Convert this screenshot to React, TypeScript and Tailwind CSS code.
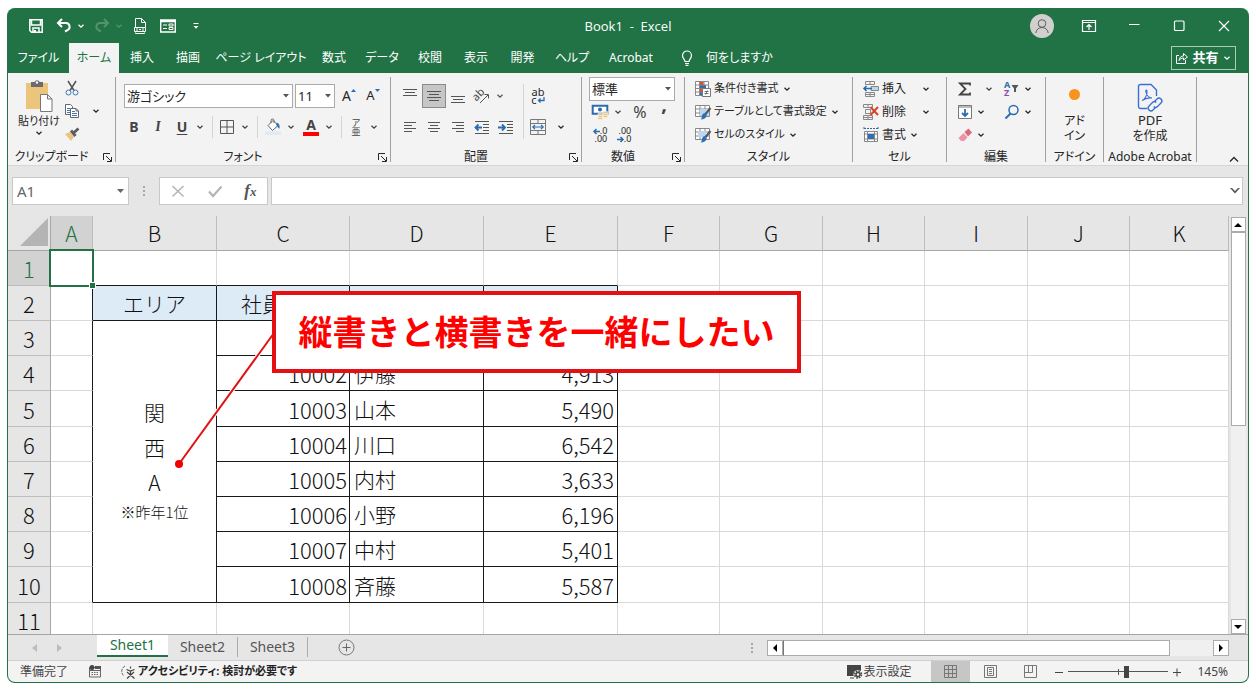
import React from "react";

const UI_FONT = "font-['Noto_Sans','Noto_Sans_CJK_JP',sans-serif]";
const SHEET_FONT = "font-['Noto_Sans_CJK_JP','Noto_Sans',sans-serif]";

interface Column {
  name: string;
  width: string;
}

interface Employee {
  id: string;
  name: string;
  sales: string;
}

const columns: Column[] = [
  { name: "A", width: "w-[42px]" },
  { name: "B", width: "w-[124px]" },
  { name: "C", width: "w-[133px]" },
  { name: "D", width: "w-[134px]" },
  { name: "E", width: "w-[134px]" },
  { name: "F", width: "w-[102px]" },
  { name: "G", width: "w-[103px]" },
  { name: "H", width: "w-[102px]" },
  { name: "I", width: "w-[103px]" },
  { name: "J", width: "w-[102px]" },
  { name: "K", width: "" },
];

const employees: Employee[] = [
  { id: "10001", name: "", sales: "" },
  { id: "10002", name: "伊藤", sales: "4,913" },
  { id: "10003", name: "山本", sales: "5,490" },
  { id: "10004", name: "川口", sales: "6,542" },
  { id: "10005", name: "内村", sales: "3,633" },
  { id: "10006", name: "小野", sales: "6,196" },
  { id: "10007", name: "中村", sales: "5,401" },
  { id: "10008", name: "斉藤", sales: "5,587" },
];

const tabs = [
  { label: "ファイル", width: "w-[61px]" },
  { label: "ホーム", width: "w-[50px]" },
  { label: "挿入", width: "w-[46px]" },
  { label: "描画", width: "w-[46px]" },
  { label: "ページ レイアウト", width: "w-[100px]" },
  { label: "数式", width: "w-[46px]" },
  { label: "データ", width: "w-[50px]" },
  { label: "校閲", width: "w-[46px]" },
  { label: "表示", width: "w-[46px]" },
  { label: "開発", width: "w-[47px]" },
  { label: "ヘルプ", width: "w-[52px]" },
  { label: "Acrobat", width: "w-[66px]" },
];

/* ---------- small helpers ---------- */

interface SvgProps {
  w?: number;
  h?: number;
  children: React.ReactNode;
}

function Svg({ w = 16, h = 16, children }: SvgProps) {
  return (
    <svg
      width={w}
      height={h}
      viewBox={`0 0 ${w} ${h}`}
      fill="none"
      stroke="currentColor"
      className="shrink-0 overflow-visible"
      aria-hidden="true"
    >
      {children}
    </svg>
  );
}

function Chevron() {
  return (
    <Svg w={8} h={8}>
      <path d="M1.500 2.800 4 5.200 6.500 2.800" strokeWidth="1.300" />
    </Svg>
  );
}

interface ToolProps {
  label: string;
  className?: string;
  children: React.ReactNode;
}

function Tool({ label, className = "w-6", children }: ToolProps) {
  return (
    <button type="button" aria-label={label} className={`flex h-6 shrink-0 items-center justify-center ${className}`}>
      {children}
    </button>
  );
}

function More({ label, className = "w-3" }: { label: string; className?: string }) {
  return (
    <Tool label={label} className={className}>
      <Chevron />
    </Tool>
  );
}

interface GroupProps {
  title: string;
  className: string;
  launcher?: boolean;
  children: React.ReactNode;
}

function Group({ title, className, launcher, children }: GroupProps) {
  return (
    <section aria-label={title} className={`flex shrink-0 flex-col pt-1 pb-[3px] ${className}`}>
      <div className="flex flex-1 flex-col border-r border-[#a0a0a0]">
        <div className="flex-1">{children}</div>
        <div className="-mb-[3px] flex h-4 items-center">
          <span className="flex-1 whitespace-nowrap text-center text-xs leading-4">{title}</span>
          {launcher && (
            <button type="button" aria-label={`${title}の設定`} className="mr-[3px] ml-2 flex items-center">
              <Svg w={9} h={9}>
                <path d="M.500 7V.500H7M3 3l5 5M8.500 4v4.500H4" />
              </Svg>
            </button>
          )}
        </div>
      </div>
    </section>
  );
}

function Divider() {
  return <div className="h-[22px] w-px shrink-0 bg-[#d4d4d4]" />;
}

interface PickerProps {
  label: string;
  value: string;
  className: string;
}

function Picker({ label, value, className }: PickerProps) {
  return (
    <label className={`relative flex h-6 items-center ${className}`}>
      <select aria-label={label} className="h-full w-full appearance-none border border-[#ababab] bg-white px-0.5 text-[13px] leading-5">
        <option>{value}</option>
      </select>
      <svg width="6" height="4" viewBox="0 0 6 4" className="pointer-events-none absolute right-1 fill-[#555]">
        <path d="M0 0h6L3 3.500z" />
      </svg>
    </label>
  );
}

/* ---------- title bar ---------- */

function TitleBar() {
  return (
    <header className="grid h-[35px] grid-cols-[1fr_auto_1fr] items-center text-white">
      <div className="flex items-center pl-4">
        <Tool label="上書き保存">
          <Svg>
            <path d="M1.800 1.800h12.400v12.400H3.500L1.800 12.500zM3.500 2v5h9V2M5 14v-4h6v4" strokeWidth="1.500" />
            <path d="M6 12h2v2H6z" fill="currentColor" stroke="none" />
          </Svg>
        </Tool>
        <Tool label="元に戻す" className="ml-1 w-6">
          <Svg>
            <path d="M6 1 2 5l4 4M2.500 5H10a3.800 3.800 0 0 1 1.500 7.200L9 13.500" strokeWidth="2" />
          </Svg>
        </Tool>
        <More label="元に戻す一覧" className="w-[10px]" />
        <span className="ml-1 flex text-[#549370]">
          <Tool label="やり直し">
            <Svg>
              <path d="m10 1 4 4-4 4M13.500 5H6a3.800 3.800 0 0 0-1.500 7.200L7 13.500" strokeWidth="2" />
            </Svg>
          </Tool>
          <More label="やり直し一覧" className="w-[10px]" />
        </span>
        <Tool label="印刷プレビュー" className="ml-1 w-6">
          <Svg>
            <path d="M3.500 9V.500h6l4 4V9M9.500.500v4h4M3.500 14.500v1h9v-1" />
            <path d="M2.500 9.500h11v4h-11zM5 9.500v4M11 9.500v4M7 11.500h2" />
          </Svg>
        </Tool>
        <Tool label="フォーム" className="ml-1 w-6">
          <Svg>
            <path d="M.700 2h14.600v12H.700zM.700 3.500h14.600" strokeWidth="1.400" />
            <path d="M3 7h4M3 10.500h4M9 6h4v2H9zM9 9.500h4v2H9z" />
          </Svg>
        </Tool>
        <Tool label="クイック アクセス ツール バーのユーザー設定" className="ml-1 w-6">
          <Svg w={8} h={8}>
            <path d="M1.500 1.500h5" />
            <path d="M1.500 4h5L4 6.800z" fill="currentColor" stroke="none" />
          </Svg>
        </Tool>
      </div>
      <h1 className="whitespace-pre text-[13px] leading-5 font-['Open_Sans',sans-serif]">Book1  -  Excel</h1>
      <div className="flex items-center justify-end pr-3">
        <button type="button" aria-label="アカウント" className="mr-[23px] flex size-6 items-center justify-center rounded-full bg-[#d2d0ce] text-[#605e5c]">
          <Svg>
            <circle cx="8" cy="5.500" r="3.800" />
            <path d="M1.800 15c.5-3.500 3-5.500 6.200-5.500s5.700 2 6.200 5.500" />
          </Svg>
        </button>
        <Tool label="リボンの表示オプション">
          <Svg>
            <path d="M1.500 2.500h13v11h-13zM1.500 4.500h13M8 12V7M5.500 9 8 6.500 10.500 9" strokeWidth="1.200" />
          </Svg>
        </Tool>
        <Tool label="最小化" className="ml-[21px] w-6">
          <Svg><path d="M3 6.500h10.500" strokeWidth="1.200" /></Svg>
        </Tool>
        <Tool label="最大化" className="ml-[21px] w-6">
          <Svg><rect x="3.500" y="3" width="9.500" height="9.500" rx="1" strokeWidth="1.200" /></Svg>
        </Tool>
        <Tool label="閉じる" className="ml-[21px] w-6">
          <Svg><path d="m3 3 10 10M13 3 3 13" strokeWidth="1.200" /></Svg>
        </Tool>
      </div>
    </header>
  );
}

function TabBar() {
  return (
    <nav className="flex h-[30px] items-stretch text-xs text-white">
      {tabs.map((tab) => (
        <button
          key={tab.label}
          type="button"
          className={`shrink-0 whitespace-nowrap ${tab.width} ${tab.label === "ホーム" ? "bg-[#f3f3f3] text-[#217346]" : ""}`}
        >
          {tab.label}
        </button>
      ))}
      <button type="button" className="ml-4 flex items-center gap-3 whitespace-nowrap">
        <Svg w={14} h={16}>
          <path d="M5 11.500c0-2-2.500-3-2.500-6a4.500 4.500 0 0 1 9 0c0 3-2.500 4-2.500 6zM5 13.500h4M5.500 15.300h3" strokeWidth="1.200" />
        </Svg>
        何をしますか
      </button>
      <button
        type="button"
        className="mt-[3px] mr-3 mb-[3px] ml-auto flex w-[65px] items-center justify-center gap-1 border border-[#a9cdb8] text-[13px] font-bold"
      >
        <Svg w={12} h={12}>
          <path d="M3 3.500H.500v8h9V8" />
          <path d="M3 8.500c.3-3 2-4.500 4.500-4.500V1.500l4 3.500-4 3V6C5.500 6 4 6.800 3 8.500z" />
        </Svg>
        共有
        <Chevron />
      </button>
    </nav>
  );
}

/* ---------- ribbon ---------- */

function ClipboardGroup() {
  return (
    <Group title="クリップボード" className="w-[108px]" launcher>
      <div className="flex">
        <button type="button" className="flex w-14 flex-col items-center whitespace-nowrap pt-0.5 pl-1.5 text-[11px] leading-4">
          <Svg w={28} h={34}>
            <g stroke="none">
              <path d="M1 4h22v26H1z" fill="#ecc57d" />
              <path d="M6 3h3.500a2.800 2.800 0 0 1 5.200 0H18v5H6z" fill="#6b6b6b" />
              <circle cx="12" cy="3.500" r="1.200" fill="#fff" />
            </g>
            <path d="M15.500 15.500h7l4.500 4.500v12.500H15.500zM22.500 15.500V20H27" fill="#fff" stroke="#777" />
          </Svg>
          <span>貼り付け</span>
          <Chevron />
        </button>
        <div className="flex flex-col">
          <button type="button" aria-label="切り取り" className="flex h-[22px] items-center">
            <Svg>
              <path d="m4 1 6 9.500M12 1 6 10.500" stroke="#555" strokeWidth="1.500" />
              <circle cx="4.500" cy="12.500" r="2.500" stroke="#3f78b5" />
              <circle cx="11.500" cy="12.500" r="2.500" stroke="#3f78b5" />
            </Svg>
          </button>
          <button type="button" aria-label="コピー" className="flex h-6 items-center gap-3">
            <Svg>
              <path d="M1.500 1.500h5l2 2v8h-7z" fill="#fff" stroke="#666" />
              <path d="M6.500 5.500h5.500l2.500 2.500v6.500h-8zM12 5.500V8h2.500" fill="#fff" stroke="#666" />
              <path d="M3 5.500h3M3 7.500h3M3 9.500h3M8 8.500h3M8 10.500h5M8 12.500h5" stroke="#3f78b5" />
            </Svg>
            <Chevron />
          </button>
          <button type="button" aria-label="書式のコピー/貼り付け" className="flex h-[22px] items-center">
            <Svg>
              <path d="m1 8 5-2 4 5-3 4z" fill="#ecc57d" stroke="none" />
              <path d="m7 4.500 4.500 5.500M9.500 7 14.500 2.500" stroke="#5c5c5c" strokeWidth="2.800" />
            </Svg>
          </button>
        </div>
      </div>
    </Group>
  );
}

function FontGroup() {
  return (
    <Group title="フォント" className="w-[275px]" launcher>
      <div className="flex flex-col gap-[7px] pt-[7px]">
        <div className="flex items-center pl-2">
          <Picker label="フォント" value="游ゴシック" className="w-[169px]" />
          <Picker label="フォント サイズ" value="11" className="ml-0.5 w-10" />
          <Tool label="フォント サイズの拡大" className="ml-0.5 w-6">
            <span className="text-sm">A</span>
            <svg width="5" height="3" viewBox="0 0 5 3" className="mb-3 fill-[#2b6cb0]"><path d="M0 3h5L2.500 0z" /></svg>
          </Tool>
          <Tool label="フォント サイズの縮小">
            <span className="text-[13px]">A</span>
            <svg width="5" height="3" viewBox="0 0 5 3" className="mb-3 fill-[#2b6cb0]"><path d="M0 0h5L2.500 3z" /></svg>
          </Tool>
        </div>
        <div className="flex items-center pl-1.5 text-sm text-[#444]">
          <Tool label="太字"><b>B</b></Tool>
          <Tool label="斜体"><b className="font-serif italic">I</b></Tool>
          <Tool label="下線"><b className="underline underline-offset-2">U</b></Tool>
          <More label="下線の種類" />
          <span className="ml-1.5"><Divider /></span>
          <Tool label="罫線" className="ml-0.5 w-6">
            <Svg><path d="M1.500 1.500h13v13h-13zM8 1.500v13M1.500 8h13" stroke="#555" /></Svg>
          </Tool>
          <More label="罫線の種類" />
          <span className="ml-1.5"><Divider /></span>
          <Tool label="塗りつぶしの色" className="ml-[3px] w-6">
            <Svg>
              <path d="m3 6.500 5-5 5 5-5.500 5z" fill="#fff" stroke="#666" />
              <path d="M6 4V1.500a1.500 1.500 0 0 1 3 0V4" stroke="#666" />
              <path d="M11.500 3.500c2.500.5 3.500 2.500 3 6-1 .5-1.500-1.500-3-3z" fill="#2f6fb3" stroke="none" />
              <path d="M0 12.500h16V16H0z" fill="#dcebf7" stroke="none" />
            </Svg>
          </Tool>
          <More label="塗りつぶしの色の一覧" />
          <Tool label="フォントの色" className="ml-0.5 w-6">
            <span className="flex h-[18px] w-4 items-center justify-center border-b-4 border-[#f00] font-bold leading-[14px]">A</span>
          </Tool>
          <More label="フォントの色の一覧" />
          <span className="ml-1.5"><Divider /></span>
          <Tool label="ふりがなの表示" className="ml-0.5 w-6">
            <span className="flex flex-col text-[9px] leading-[9px]">
              <span>ア</span>
              <span>亜</span>
            </span>
          </Tool>
          <More label="ふりがなの設定" />
        </div>
      </div>
    </Group>
  );
}

function AlignmentGroup() {
  return (
    <Group title="配置" className="w-[191px]" launcher>
      <div className="flex pt-[7px]">
        <div className="flex w-[132px] flex-col gap-[7px] pl-[7px] text-[#555]">
          <div className="flex">
            <Tool label="上揃え"><Svg><path d="M1 1.500h14M3 4.500h10M1 7.500h14" /></Svg></Tool>
            <Tool label="上下中央揃え" className="w-6 border border-[#8a8a8a] bg-[#c6c6c6]">
              <Svg><path d="M1 3.500h14M3 6.500h10M1 9.500h14M3 12.500h10" /></Svg>
            </Tool>
            <Tool label="下揃え"><Svg><path d="M1 8.500h14M3 11.500h10M1 14.500h14" /></Svg></Tool>
            <Tool label="方向">
              <Svg>
                <text x="-1" y="10" fontSize="11" stroke="none" fill="#444" transform="rotate(-45 5 8)">ab</text>
                <path d="m6 15 8-8M10.500 6.500H14.500V10.500" />
              </Svg>
            </Tool>
            <More label="方向の一覧" />
          </div>
          <div className="flex">
            <Tool label="左揃え"><Svg><path d="M2 3.500h12M2 6.500h8M2 9.500h12M2 12.500h8" /></Svg></Tool>
            <Tool label="中央揃え"><Svg><path d="M2 3.500h12M4 6.500h8M2 9.500h12M4 12.500h8" /></Svg></Tool>
            <Tool label="右揃え"><Svg><path d="M2 3.500h12M6 6.500h8M2 9.500h12M6 12.500h8" /></Svg></Tool>
            <Tool label="インデントを減らす">
              <Svg>
                <path d="M1 2.500h14M9 5.500h6M9 8.500h6M9 11.500h6M1 14.500h14" />
                <path d="M8 8.500H1.500M4.500 5.500l-3 3 3 3" stroke="#2b6cb0" strokeWidth="1.800" />
              </Svg>
            </Tool>
            <Tool label="インデントを増やす">
              <Svg>
                <path d="M1 2.500h14M9 5.500h6M9 8.500h6M9 11.500h6M1 14.500h14" />
                <path d="M0 8.500h6.500M4 5.500l3 3-3 3" stroke="#2b6cb0" strokeWidth="1.800" />
              </Svg>
            </Tool>
          </div>
        </div>
        <div className="flex flex-col gap-[7px] border-l border-[#d4d4d4]">
          <Tool label="折り返して全体を表示する" className="w-7">
            <span className="flex flex-col text-[11px] leading-[8px]">
              <span>ab</span>
              <span className="flex items-center">
                c
                <Svg w={8} h={8}><path d="M7 1v3.500H1.500M3.500 2.500l-2 2 2 2" stroke="#2b6cb0" strokeWidth="1.300" /></Svg>
              </span>
            </span>
          </Tool>
          <div className="flex">
            <Tool label="セルを結合して中央揃え" className="w-7">
              <Svg>
                <path d="M.500.500h15v15H.500zM.500 4.500h15M.500 11.500h15M8 .500v4M8 11.500v4" stroke="#777" />
                <path d="M2.500 8h11M5 5.800 2.800 8 5 10.200M11 5.800 13.200 8 11 10.200" stroke="#2b6cb0" strokeWidth="1.200" />
              </Svg>
            </Tool>
            <More label="結合の種類" className="w-[18px]" />
          </div>
        </div>
      </div>
    </Group>
  );
}

function NumberGroup() {
  return (
    <Group title="数値" className="w-[103px]" launcher>
      <Picker label="表示形式" value="標準" className="ml-[7px] w-[86px]" />
      <div className="flex h-[22px] items-center pl-1.5 text-[#444]">
        <Tool label="通貨表示形式">
          <Svg>
            <path d="M.700 1.700h14.600v8H.700z" stroke="#2b6cb0" strokeWidth="2" fill="#fff" />
            <circle cx="8" cy="5.500" r="2" fill="#2b6cb0" stroke="none" />
            <path d="M6 9.500h4.500v6H6zM11 7.500h4.500v6H11z" fill="#ecc57d" stroke="#f3f3f3" strokeWidth=".6" />
            <path d="M6 11.500h4.500M6 13.500h4.500M11 9.500h4.500M11 11.500h4.500" stroke="#f3f3f3" strokeWidth=".7" />
          </Svg>
        </Tool>
        <More label="通貨の一覧" />
        <Tool label="パーセント スタイル" className="ml-1 w-6"><span className="text-base">%</span></Tool>
        <Tool label="桁区切りスタイル"><b className="pb-4 text-xl leading-5">,</b></Tool>
      </div>
      <div className="flex h-6 items-center pl-1.5 text-[9px] leading-[8px]">
        <Tool label="小数点以下の表示桁数を増やす">
          <span className="flex flex-col items-end">
            <span className="flex items-center">
              <Svg w={7} h={7}><path d="M7 3.500H1M3.500 1 1 3.500 3.500 6" stroke="#2b6cb0" strokeWidth="1.500" /></Svg>
              .0
            </span>
            <span>.00</span>
          </span>
        </Tool>
        <Tool label="小数点以下の表示桁数を減らす">
          <span className="flex flex-col items-end">
            <span>.00</span>
            <span className="flex items-center">
              <Svg w={7} h={7}><path d="M0 3.500h6M3.500 1 6 3.500 3.500 6" stroke="#2b6cb0" strokeWidth="1.500" /></Svg>
              .0
            </span>
          </span>
        </Tool>
      </div>
    </Group>
  );
}

function CondIcon() {
  return (
    <Svg>
      <path d="M.500.500h13v14H.500zM.500 4h13M.500 7.500h13M.500 11h13M4.500.500v14M9 .500v14" fill="#fff" stroke="#888" />
      <path d="M5 1h3.500v3H5zM5 7.500h3.500V11H5z" fill="#d9532c" stroke="none" />
      <path d="M5 4.300h6V7H5zM5 11.300h3v3H5z" fill="#2f6fb3" stroke="none" />
      <path d="M7.500 7.500h8v8h-8z" fill="#fff" stroke="#777" />
      <path d="M9.500 10.500h4M9.500 12.500h4M12.500 9.500l-2 4" stroke="#555" strokeWidth=".8" />
    </Svg>
  );
}

function BrushTableIcon({ filled }: { filled: boolean }) {
  return (
    <Svg>
      <path d="M.500 1.500h14v11H.500zM.500 5h14M.500 9h14M5 1.500v11M10 1.500v11" fill="#fff" stroke="#888" />
      <path d={filled ? "M3 4h8v6H3z" : "M5 5h9v7H5z"} fill="#bcd6ee" stroke="none" />
      <path d="m15.500 4-5 6" stroke="#555" strokeWidth="2" />
      <path d="M10.500 9c1 .5 1.500 1.500 1 3-.5 2-2.500 3.500-6 3.500 1.500-1 1-2 1.500-4 .5-1.500 2-2.800 3.500-2.500z" fill="#2f6fb3" stroke="none" />
    </Svg>
  );
}

function StyleGroup() {
  const rows = [
    { label: "条件付き書式", icon: <CondIcon /> },
    { label: "テーブルとして書式設定", icon: <BrushTableIcon filled={false} /> },
    { label: "セルのスタイル", icon: <BrushTableIcon filled /> },
  ];
  return (
    <Group title="スタイル" className="w-[168px]">
      {rows.map((row) => (
        <button key={row.label} type="button" className="flex h-[23px] items-center whitespace-nowrap pl-2.5 text-[11px]">
          {row.icon}
          <span className="mr-1 ml-[3px]">{row.label}</span>
          <Chevron />
        </button>
      ))}
    </Group>
  );
}

function CellGroup() {
  return (
    <Group title="セル" className="w-[94px]">
      <button type="button" className="flex h-[23px] items-center pl-2.5 text-xs">
        <Svg>
          <path d="M2.500.500h9v3h-9zM7 .500v3M2.500 11.500h9v4h-9zM7 11.500v4M2.500 13.500h9" stroke="#888" />
          <path d="M8 5.500h7.500v4H8z" fill="#bcd6ee" stroke="#888" />
          <path d="M9 7.500H1M3.500 5 1 7.500 3.500 10" stroke="#2b6cb0" strokeWidth="1.600" />
        </Svg>
        <span className="mr-4 ml-[3px]">挿入</span>
        <Chevron />
      </button>
      <button type="button" className="flex h-[23px] items-center pl-2.5 text-xs">
        <Svg>
          <path d="M.500.500h9v3h-9zM5 .500v3M.500 11.500h9v4h-9zM5 11.500v4M.500 13.500h9M2.500 5.500h5v4h-5z" stroke="#888" />
          <path d="m7.500 3 7.500 8M15 3l-7.500 8" stroke="#d9432c" strokeWidth="2" />
        </Svg>
        <span className="mr-4 ml-[3px]">削除</span>
        <Chevron />
      </button>
      <button type="button" className="flex h-[23px] items-center pl-2.5 text-xs">
        <Svg>
          <path d="M1 1.500h14M1 0v3M15 0v3" stroke="#2b6cb0" strokeDasharray="2 1" />
          <path d="M1.500 4.500h13v10h-13zM4.500 4.500v10M11.500 4.500v10M1.500 7h13M1.500 12h13" fill="#fff" stroke="#888" />
          <path d="M5 7h6v5H5z" fill="#2f6fb3" stroke="none" />
        </Svg>
        <span className="mr-1 ml-[3px]">書式</span>
        <Chevron />
      </button>
    </Group>
  );
}

function EditGroup() {
  return (
    <Group title="編集" className="w-[99px]">
      <div className="grid grid-cols-[50px_48px]">
        <button type="button" aria-label="オート SUM" className="flex h-[23px] items-center gap-3 pl-2.5 text-[#444]">
          <Svg><path d="M13 4.500V2.500H3L8.500 8 3 13.500h10v-2" strokeWidth="1.800" /></Svg>
          <Chevron />
        </button>
        <button type="button" aria-label="並べ替えとフィルター" className="flex h-[23px] items-center gap-1 pl-[7px]">
          <Svg>
            <text x="0" y="7" fontSize="9" fontWeight="bold" stroke="none" fill="#2b6cb0">A</text>
            <text x="0" y="15" fontSize="9" fontWeight="bold" stroke="none" fill="#8e4fa8">Z</text>
            <path d="M7.500 4h7L12 7.500V11h-2V7.500z" fill="#555" stroke="none" />
          </Svg>
          <Chevron />
        </button>
        <button type="button" aria-label="フィル" className="flex h-[23px] items-center gap-1 pl-2.5">
          <Svg>
            <path d="M1.500 1.500h13v13h-13zM1.500 3h13" fill="#fff" stroke="#777" />
            <path d="M8 5v7M5 9l3 3 3-3" stroke="#2b6cb0" strokeWidth="1.800" />
          </Svg>
          <Chevron />
        </button>
        <button type="button" aria-label="検索と選択" className="flex h-[23px] items-center gap-1 pl-[7px]">
          <Svg>
            <circle cx="9.500" cy="6" r="4.500" stroke="#2b6cb0" strokeWidth="1.500" />
            <path d="m6.500 9.500-5 5" stroke="#2b6cb0" strokeWidth="2" />
          </Svg>
          <Chevron />
        </button>
        <button type="button" aria-label="クリア" className="flex h-[23px] items-center gap-1 pl-2.5">
          <Svg>
            <path d="m7.500 5 4-3.500 3.500 4L11 9.500z" fill="#e0677e" stroke="none" />
            <path d="m6.500 6 4 4.500L7 14H4l-2.500-3z" fill="#ee93a3" stroke="none" />
          </Svg>
          <Chevron />
        </button>
      </div>
    </Group>
  );
}

function Ribbon() {
  return (
    <div className="flex h-[93px] border-b border-[#d6d6d6] bg-[#f3f3f3] text-[#262626]">
      <ClipboardGroup />
      <FontGroup />
      <AlignmentGroup />
      <NumberGroup />
      <StyleGroup />
      <CellGroup />
      <EditGroup />
      <Group title="アドイン" className="w-[58px]">
        <button type="button" className="flex w-full flex-col items-center text-xs leading-[15px]">
          <span className="mt-3 mb-[13px] size-[11px] rounded-full bg-[#f7941d]" />
          <span>アド</span>
          <span>イン</span>
        </button>
      </Group>
      <Group title="Adobe Acrobat" className="w-[93px]">
        <button type="button" className="flex w-full flex-col items-center pt-1.5 text-[13px] leading-[15px]">
          <Svg w={26} h={30}>
            <g stroke="#3b6fd4" strokeWidth="1.400">
              <path d="M10 25.500H3.500a2 2 0 0 1-2-2v-20a2 2 0 0 1 2-2H14l5.500 5.500v6" />
              <path d="M5 17.500c3-1.500 5.500-5.500 5-9.500-.3-1.500-1.500-1-1.200.5.600 3.500 3 6 6.200 6.500-3.500-.5-7 .5-10 2.500z" strokeWidth="1.100" />
              <path d="m17.500 18.500 2.500-2.500a2.700 2.700 0 0 1 4 4l-3.500 3.500a2.700 2.700 0 0 1-3.800 0" />
              <path d="m18.500 24.500-2.500 2.500a2.700 2.700 0 0 1-4-4l3.500-3.500a2.700 2.700 0 0 1 3.800 0" />
            </g>
          </Svg>
          PDF
          <span className="text-xs leading-[15px]">を作成</span>
        </button>
      </Group>
      <button type="button" aria-label="リボンを折りたたむ" className="mr-2 mb-0.5 ml-auto self-end">
        <Svg w={12} h={8}><path d="M2 6.500 6 2.500l4 4" strokeWidth="1.300" /></Svg>
      </button>
    </div>
  );
}

/* ---------- formula bar ---------- */

function FormulaBar() {
  return (
    <div className="flex items-center bg-[#e6e6e6] pt-[11px] pr-[5px] pb-[11px] pl-1">
      <div className="flex h-7 w-[117px] items-center border border-[#c8c8c8] bg-white">
        <input aria-label="名前ボックス" defaultValue="A1" className="w-0 flex-1 px-1 text-[15px] text-[#666]" />
        <button type="button" aria-label="名前の一覧" className="px-1">
          <svg width="7" height="4" viewBox="0 0 7 4" className="fill-[#666]"><path d="M0 0h7L3.500 4z" /></svg>
        </button>
      </div>
      <Dots />
      <div className="flex h-7 w-[109px] items-center justify-around border border-[#c8c8c8] bg-white text-[#b5b5b5]">
        <button type="button" aria-label="キャンセル">
          <Svg><path d="m2.500 3 11 10.500M13.500 3l-11 10.500" strokeWidth="1.600" /></Svg>
        </button>
        <button type="button" aria-label="入力">
          <Svg><path d="m2 8.500 4 4.500 8.500-9.500" strokeWidth="2.200" /></Svg>
        </button>
        <button type="button" aria-label="関数の挿入" className="font-['Liberation_Serif',serif] text-[17px] leading-5 font-bold text-[#555] italic">
          f<span className="text-[13px]">x</span>
        </button>
      </div>
      <div className="ml-[3px] flex h-7 flex-1 items-center border border-[#c8c8c8] bg-white">
        <input aria-label="数式バー" className="w-0 flex-1 px-1" />
        <button type="button" aria-label="数式バーの展開" className="px-0.5 text-[#444]">
          <svg width="10" height="6" viewBox="0 0 10 6" className="fill-[#555]"><path d="M0 0h2l3 3 3-3h2L5 5.500z" /></svg>
        </button>
      </div>
    </div>
  );
}

function Dots() {
  return (
    <div className="flex w-[30px] flex-col items-center gap-0.5">
      <span className="size-0.5 bg-[#a6a6a6]" />
      <span className="size-0.5 bg-[#a6a6a6]" />
      <span className="size-0.5 bg-[#a6a6a6]" />
    </div>
  );
}

/* ---------- worksheet ---------- */

const GRID = "border-r border-b border-[#d9d9d9]";
const RULED = "border-r border-b border-[#1a1a1a]";

function RowHeader({ row }: { row: number }) {
  return (
    <th
      scope="row"
      className={`border-r border-b border-r-[#a6a6a6] border-b-[#bdbdbd] text-center text-[22px] leading-7 font-light ${
        row === 1 ? "bg-[#d2d2d2] text-[#217346]" : "bg-[#e6e6e6]"
      } ${row % 5 === 0 ? "h-9" : "h-[35px]"}`}
    >
      {row}
    </th>
  );
}

function EmptyCells({ from }: { from: number }) {
  return (
    <>
      {columns.slice(from).map((col) => (
        <td key={col.name} className={GRID} />
      ))}
    </>
  );
}

function Sheet() {
  return (
    <table className={`w-full table-fixed border-separate border-spacing-0 text-[21px] leading-7 font-light text-[#111] ${SHEET_FONT}`}>
      <colgroup>
        <col className="w-[43px]" />
        {columns.map((col) => (
          <col key={col.name} className={col.width} />
        ))}
      </colgroup>
      <thead>
        <tr>
          <th aria-label="すべて選択" className="h-[35px] border-r border-b border-[#a6a6a6] bg-[#e6e6e6] pr-0.5 pb-0.5">
            <svg width="28" height="28" viewBox="0 0 28 28" className="ml-auto fill-[#b4b4b4]"><path d="M28 0v28H0z" /></svg>
          </th>
          {columns.map((col) => (
            <th
              key={col.name}
              scope="col"
              className={`border-r border-b border-r-[#bdbdbd] border-b-[#a6a6a6] text-center font-light ${
                col.name === "A" ? "bg-[#d2d2d2] text-[#217346]" : "bg-[#e6e6e6]"
              }`}
            >
              {col.name}
            </th>
          ))}
        </tr>
      </thead>
      <tbody>
        <tr>
          <RowHeader row={1} />
          <td className={`relative ${GRID}`}>
            <span className="absolute -inset-0.5 border-2 border-[#217346]" />
            <span className="absolute -right-[3px] -bottom-[3px] size-[5px] bg-[#217346] outline outline-white" />
          </td>
          {columns.slice(1, 5).map((col) => (
            <td key={col.name} className="border-r border-b border-r-[#d9d9d9] border-b-[#1a1a1a]" />
          ))}
          <EmptyCells from={5} />
        </tr>
        <tr>
          <RowHeader row={2} />
          <td className="border-r border-b border-r-[#1a1a1a] border-b-[#d9d9d9]" />
          <td className={`bg-[#ddebf7] text-center ${RULED}`}>エリア</td>
          <td className={`bg-[#ddebf7] text-center ${RULED}`}>社員番号</td>
          <td className={`bg-[#ddebf7] ${RULED}`} />
          <td className={`bg-[#ddebf7] ${RULED}`} />
          <EmptyCells from={5} />
        </tr>
        {employees.map((emp, i) => (
          <tr key={emp.id}>
            <RowHeader row={i + 3} />
            <td className="border-r border-b border-r-[#1a1a1a] border-b-[#d9d9d9]" />
            {i === 0 && (
              <td rowSpan={employees.length} className={`pb-1 text-center align-middle leading-[35px] ${RULED}`}>
                関
                <br />
                西
                <br />
                A
                <div className="text-[15px] leading-6">※昨年1位</div>
              </td>
            )}
            <td className={`pr-0.5 text-right text-[22px] leading-7 ${RULED}`}>{emp.id}</td>
            <td className={`pl-1 ${RULED}`}>{emp.name}</td>
            <td className={`pr-[3px] text-right text-[22px] leading-7 ${RULED}`}>{emp.sales}</td>
            <EmptyCells from={5} />
          </tr>
        ))}
        <tr>
          <RowHeader row={11} />
          <EmptyCells from={0} />
        </tr>
      </tbody>
    </table>
  );
}

function Callout() {
  return (
    <>
      <svg width="110" height="150" viewBox="0 0 110 150" className="absolute top-[110px] left-[164px]">
        <path d="M102 7 7 138" stroke="#fff" strokeWidth="4" />
        <path d="M102 7 7 138" stroke="#e01010" strokeWidth="2" />
        <circle cx="7" cy="138" r="4" fill="#f00000" />
      </svg>
      <p
        className={`absolute top-[75px] left-[264px] flex h-[82px] w-[529px] items-center justify-center border-4 border-[#e60f12] bg-white pb-1 text-[34px] font-bold whitespace-nowrap text-[#f00] ${SHEET_FONT}`}
      >
        縦書きと横書きを一緒にしたい
      </p>
    </>
  );
}

function ArrowButton({ label, path, className }: { label: string; path: string; className: string }) {
  return (
    <button type="button" aria-label={label} className={`flex shrink-0 items-center justify-center border border-[#ababab] bg-white ${className}`}>
      <svg width="8" height="8" viewBox="0 0 8 8" className="fill-black"><path d={path} /></svg>
    </button>
  );
}

function SheetTabs() {
  return (
    <div className="flex h-[26px] items-start border-b border-[#d0d0d0] bg-[#e6e6e6] text-sm text-[#555]">
      <div className="flex h-[25px] w-[89px] items-center gap-5 pl-6">
        <svg width="5" height="8" viewBox="0 0 5 8" className="fill-[#bdbdbd]"><path d="M5 0v8L0 4z" /></svg>
        <svg width="5" height="8" viewBox="0 0 5 8" className="fill-[#bdbdbd]"><path d="M0 0v8l5-4z" /></svg>
      </div>
      <button type="button" className="h-[22px] w-[71px] border-b-2 border-[#217346] bg-white text-[#217346]">Sheet1</button>
      <button type="button" className="mt-0.5 h-5 w-[70px] border-r border-[#ababab]">Sheet2</button>
      <button type="button" className="mt-0.5 h-5 w-[70px] border-r border-[#ababab]">Sheet3</button>
      <button type="button" aria-label="新しいシート" className="mt-1 ml-[30px]">
        <Svg w={17} h={17}>
          <circle cx="8.500" cy="8.500" r="7.500" stroke="#777" />
          <path d="M8.500 4.500v8M4.500 8.500h8" stroke="#666" />
        </Svg>
      </button>
      <div className="ml-auto flex h-[25px] w-[511px] items-center pr-[19px]">
        <Dots />
        <ArrowButton label="左へスクロール" path="M6 0v8L2 4z" className="h-4 w-4" />
        <div className="flex h-4 flex-1 bg-[#f0f0f0]">
          <div className="w-[90%] border border-[#ababab] border-l-[#777] bg-white" />
        </div>
        <ArrowButton label="右へスクロール" path="M2 0v8l4-4z" className="h-4 w-4" />
      </div>
    </div>
  );
}

function StatusBar() {
  return (
    <footer className="flex h-[21px] items-center bg-[#f3f3f3] text-xs text-[#444]">
      <span className="ml-3">準備完了</span>
      <button type="button" aria-label="マクロの記録" className="ml-[21px]">
        <Svg w={13} h={13}>
          <path d="M.500 2.500h11v9.500H.500zM.500 5.500h11" stroke="#666" />
          <path d="M2.500 7.500h7M2.500 9.500h7" stroke="#666" strokeDasharray="1.500 1" />
          <circle cx="3" cy="2.500" r="2.500" fill="#444" stroke="none" />
          <path d="M6 1h6v3H6z" fill="#555" stroke="none" />
        </Svg>
      </button>
      <button type="button" className="ml-[18px] flex items-center gap-0.5 text-[11px] font-bold text-[#222]">
        <Svg>
          <path d="M5 2a6 6 0 0 0-1 10" stroke="#666" strokeDasharray="3 1" />
          <path d="m6.500 5.500 4 1.500 4-1.500M10.500 7v3M10.500 2.500v2M7 8l7.500 6.500M14 8l-7 6.500" stroke="#444" strokeWidth="1.200" />
        </Svg>
        アクセシビリティ: 検討が必要です
      </button>
      <button type="button" className="mr-5 ml-auto flex items-center">
        <Svg w={16} h={14}>
          <path d="M0 0h14v7H9v4H0z" fill="#444" stroke="none" />
          <path d="M3 13h4" stroke="#444" />
          <circle cx="11" cy="9.500" r="4.500" stroke="none" fill="#f3f3f3" />
          <circle cx="11" cy="9.500" r="3.400" stroke="#444" strokeWidth="1.600" strokeDasharray="1.600 1.070" />
          <circle cx="11" cy="9.500" r="2" stroke="#444" strokeWidth="1.400" />
        </Svg>
        表示設定
      </button>
      <button type="button" aria-label="標準" className="flex h-full w-[39px] items-center justify-center bg-[#c6c6c6]">
        <Svg w={13} h={13}><path d="M.500.500h12v12H.500zM4.500.500v12M8.500.500v12M.500 4.500h12M.500 8.500h12" stroke="#777" /></Svg>
      </button>
      <button type="button" aria-label="ページ レイアウト" className="flex h-full w-10 items-center justify-center">
        <Svg w={13} h={13}><path d="M.500.500h12v12H.500zM3.500 2.500h6v8h-6zM5 4.500h3M5 6.500h3M5 8.500h3" stroke="#777" /></Svg>
      </button>
      <button type="button" aria-label="改ページ プレビュー" className="flex h-full w-10 items-center justify-center">
        <Svg w={13} h={13}><path d="M.500.500h12v12H.500zM4.500.500v7M8.500.500v7M.500 7.500h8" stroke="#777" /></Svg>
      </button>
      <button type="button" aria-label="縮小" className="ml-1">
        <Svg w={10} h={10}><path d="M1 5.500h8" /></Svg>
      </button>
      <input
        type="range"
        aria-label="ズーム"
        min={0}
        max={100}
        defaultValue={58}
        className="mx-1 h-3 w-[100px] appearance-none bg-[linear-gradient(#555,#555),linear-gradient(#555,#555)] bg-[length:100%_1px,1px_6px] bg-center bg-no-repeat [&::-webkit-slider-thumb]:h-3 [&::-webkit-slider-thumb]:w-[5px] [&::-webkit-slider-thumb]:appearance-none [&::-webkit-slider-thumb]:bg-[#444]"
      />
      <button type="button" aria-label="拡大">
        <Svg w={10} h={10}><path d="M1 5.500h8M5 1.500v8" /></Svg>
      </button>
      <span className="mr-5 ml-[15px]">145%</span>
    </footer>
  );
}

export default function App() {
  return (
    <div className={`flex h-screen flex-col bg-white px-[7px] pt-2 pb-[7px] [font-feature-settings:'palt'] ${UI_FONT}`}>
      <main className="flex min-h-0 flex-1 flex-col overflow-hidden rounded-lg border border-t-0 border-[#217346] bg-[#217346]">
        <TitleBar />
        <TabBar />
        <Ribbon />
        <FormulaBar />
        <div className="flex min-h-0 flex-1 border-b border-[#a6a6a6] bg-white">
          <div className="relative min-w-0 flex-1 overflow-hidden [font-feature-settings:normal]">
            <Sheet />
            <Callout />
          </div>
          <div className="flex w-[19px] flex-col items-center bg-[#e6e6e6] pr-px">
            <ArrowButton label="上へスクロール" path="M0 6h8L4 2z" className="mt-px h-[15px] w-[15px]" />
            <div className="flex w-[15px] flex-1 flex-col bg-[#f0f0f0]">
              <div className="h-1/2 border border-[#ababab] bg-white" />
            </div>
            <ArrowButton label="下へスクロール" path="M0 2h8L4 6z" className="h-[15px] w-[15px]" />
          </div>
        </div>
        <SheetTabs />
        <StatusBar />
      </main>
    </div>
  );
}
